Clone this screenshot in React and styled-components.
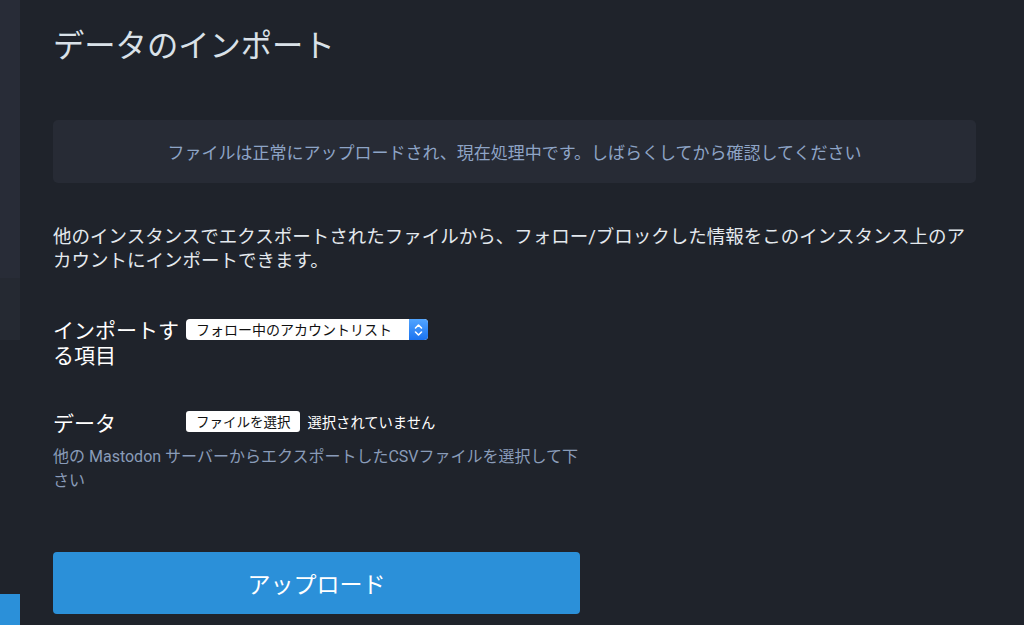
import React from 'react';
import styled, { createGlobalStyle } from 'styled-components';

const GlobalStyle = createGlobalStyle`
  * {
    margin: 0;
    padding: 0;
    box-sizing: border-box;
  }

  body {
    background: #1f232b;
    font-family: Roboto, "Noto Sans CJK JP", sans-serif;
    overflow: hidden;
  }
`;

const Layout = styled.div`
  display: grid;
  grid-template-columns: 20px 1fr;
  width: 1024px;
  height: 625px;
  background: #1f232b;
`;

const Sidebar = styled.aside`
  display: flex;
  flex-direction: column;
`;

const SidebarBlock = styled.div`
  height: ${(p) => p.h}px;
  background: ${(p) => p.bg};
  margin-top: ${(p) => (p.bottom ? 'auto' : '0')};
`;

const Content = styled.main`
  padding: 27px 48px 0 33px;
  display: flex;
  flex-direction: column;
`;

const Title = styled.h2`
  font-size: 31.3px;
  line-height: 40px;
  font-weight: 400;
  color: #d9e1e8;
`;

const Notice = styled.div`
  margin-top: 53px;
  height: 63px;
  border-radius: 5px;
  background: #272b35;
  color: #8ea4c6;
  font-size: 17px;
  display: flex;
  align-items: center;
  justify-content: center;
`;

const Lead = styled.p`
  margin-top: 42px;
  font-size: 18.5px;
  line-height: 24px;
  color: #e4e9ee;
`;

const Fields = styled.form`
  width: 527px;
  display: flex;
  flex-direction: column;
`;

const Row = styled.div`
  display: flex;
  align-items: flex-start;
  margin-top: ${(p) => p.top}px;
`;

const Label = styled.label`
  width: 133px;
  flex: none;
  font-size: 21px;
  line-height: 25px;
  color: #ffffff;
  padding-top: ${(p) => p.offset || 0}px;
`;

const SelectBox = styled.div`
  display: flex;
  width: 242px;
  height: 21px;
  border-radius: 4px;
  overflow: hidden;
  background: #ffffff;
`;

const SelectValue = styled.span`
  flex: 1;
  padding-left: 10px;
  font-size: 14px;
  line-height: 22px;
  color: #111;
`;

const Stepper = styled.span`
  width: 19px;
  display: flex;
  align-items: center;
  justify-content: center;
  background: linear-gradient(#52a5ff, #1a73f0);
`;

const FilePicker = styled.div`
  display: flex;
  align-items: center;
  gap: 8px;
`;

const FileButton = styled.span`
  height: 21px;
  padding: 0 9px 0 10px;
  border-radius: 3px;
  background: #ffffff;
  font-size: 13.5px;
  line-height: 23px;
  color: #111;
`;

const FileStatus = styled.span`
  font-size: 14.3px;
  color: #ffffff;
`;

const Hint = styled.p`
  margin-top: 8px;
  font-size: 16px;
  line-height: 24px;
  color: #8a9cb9;
`;

const Submit = styled.button`
  margin-top: 59px;
  height: 62px;
  width: 527px;
  border: 0;
  border-radius: 4px;
  background: #2b90d9;
  color: #ffffff;
  font-family: Roboto, "Noto Sans CJK JP", sans-serif;
  font-size: 23px;
`;

const StepperIcon = () => (
  <svg width="9" height="14" viewBox="0 0 9 14" fill="none" stroke="#fff" strokeWidth="1.6" strokeLinecap="round" strokeLinejoin="round">
    <path d="M1.5 5 L4.5 2 L7.5 5" />
    <path d="M1.5 9 L4.5 12 L7.5 9" />
  </svg>
);

const App = () => (
  <Layout>
    <GlobalStyle />
    <Sidebar>
      <SidebarBlock h={278} bg="#282c37" />
      <SidebarBlock h={62} bg="#252932" />
      <SidebarBlock h={31} bg="#2b90d9" bottom />
    </Sidebar>
    <Content>
      <Title>データのインポート</Title>
      <Notice>ファイルは正常にアップロードされ、現在処理中です。しばらくしてから確認してください</Notice>
      <Lead>
        他のインスタンスでエクスポートされたファイルから、フォロー/ブロックした情報をこのインスタンス上のアカウントにインポートできます。
      </Lead>
      <Fields>
        <Row top={46}>
          <Label offset={0}>インポートする項目</Label>
          <SelectBox>
            <SelectValue>フォロー中のアカウントリスト</SelectValue>
            <Stepper>
              <StepperIcon />
            </Stepper>
          </SelectBox>
        </Row>
        <Row top={42}>
          <Label offset={1}>データ</Label>
          <FilePicker>
            <FileButton>ファイルを選択</FileButton>
            <FileStatus>選択されていません</FileStatus>
          </FilePicker>
        </Row>
        <Hint>他の Mastodon サーバーからエクスポートしたCSVファイルを選択して下さい</Hint>
        <Submit type="button">アップロード</Submit>
      </Fields>
    </Content>
  </Layout>
);

export default App;
